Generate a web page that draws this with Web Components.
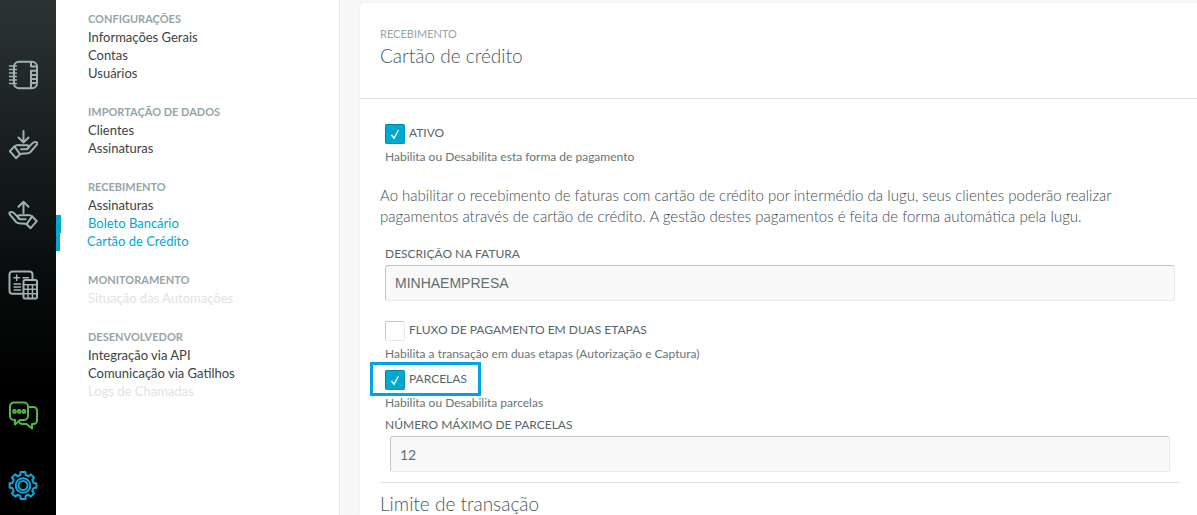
<!DOCTYPE html>
<html lang="pt-BR">
<head>
<meta charset="utf-8">
<title>Cartão de crédito</title>
<style>
  body { margin: 0; background: #f6f7f9; font-family: Lato, "Open Sans", sans-serif; color: #5f6e70; }
</style>
</head>
<body>
<app-shell>
  <icon-rail slot="rail"></icon-rail>
  <side-nav slot="nav">
    <nav-section heading="Configurações">
      <nav-item>Informações Gerais</nav-item>
      <nav-item>Contas</nav-item>
      <nav-item>Usuários</nav-item>
    </nav-section>
    <nav-section heading="Importação de dados">
      <nav-item>Clientes</nav-item>
      <nav-item>Assinaturas</nav-item>
    </nav-section>
    <nav-section heading="Recebimento">
      <nav-item>Assinaturas</nav-item>
      <nav-item state="hover">Boleto Bancário</nav-item>
      <nav-item state="active">Cartão de Crédito</nav-item>
    </nav-section>
    <nav-section heading="Monitoramento">
      <nav-item state="disabled">Situação das Automações</nav-item>
    </nav-section>
    <nav-section heading="Desenvolvedor">
      <nav-item>Integração via API</nav-item>
      <nav-item>Comunicação via Gatilhos</nav-item>
      <nav-item state="disabled">Logs de Chamadas</nav-item>
    </nav-section>
  </side-nav>
  <settings-card>
    <span slot="eyebrow">RECEBIMENTO</span>
    <span slot="title">Cartão de crédito</span>
    <check-field label="ATIVO" hint="Habilita ou Desabilita esta forma de pagamento" checked></check-field>
    <intro-text>Ao habilitar o recebimento de faturas com cartão de crédito por intermédio da Iugu, seus clientes poderão realizar pagamentos através de cartão de crédito. A gestão destes pagamentos é feita de forma automática pela Iugu.</intro-text>
    <text-field label="DESCRIÇÃO NA FATURA" value="MINHAEMPRESA"></text-field>
    <field-group>
      <check-field label="FLUXO DE PAGAMENTO EM DUAS ETAPAS" hint="Habilita a transação em duas etapas (Autorização e Captura)"></check-field>
      <check-field label="PARCELAS" hint="Habilita ou Desabilita parcelas" checked marked></check-field>
      <text-field label="NÚMERO MÁXIMO DE PARCELAS" value="12" numeric></text-field>
    </field-group>
    <sub-heading>Limite de transação</sub-heading>
  </settings-card>
</app-shell>

<script>
const define = (name, render) => customElements.define(name, class extends HTMLElement {
  connectedCallback() {
    if (!this.shadowRoot) this.attachShadow({ mode: 'open' }).innerHTML = render(this);
  }
});

define('app-shell', () => `
  <style>
    :host { display: flex; min-height: 100vh; }
    main { flex: 1; min-width: 0; padding: 3px 0 0 20px; display: flex; }
  </style>
  <slot name="rail"></slot>
  <slot name="nav"></slot>
  <main><slot></slot></main>`);

/* Eight-tooth cog outline centred on (cx, cy). */
const cog = (cx, cy) => {
  const pts = [];
  for (let i = 0; i < 8; i++) {
    for (const [offset, r] of [[-14, 10.8], [-10, 13.6], [10, 13.6], [14, 10.8]]) {
      const a = (i * 45 + offset - 90) * Math.PI / 180;
      pts.push((cx + r * Math.cos(a)).toFixed(2) + ' ' + (cy + r * Math.sin(a)).toFixed(2));
    }
  }
  return 'M' + pts.join('L') + 'Z';
};

const hand = `<path d="M1.8 21.2 6.4 16.4 12 24.2 8 28.2Z"/>
  <path d="M6.4 16.4C8 15 10 14.8 13 15.2h6.200c2.200 0 2.200 3.200 0 3.600L24 13.600c1-1 2.500-1.700 4.300-1.500 1.200.3 1.200 1.800.4 2.600L22.500 22c-1.200 1.200-2.500 1.500-4.500 1.500-2.500 0-4.500-.2-6 .7M13 19.300h6"/>`;

const icons = {
  contatos: `<rect x="6" y="1.800" width="23" height="26.500" rx="5"/>
    <path d="M23 2v4.500h5.500M23 28V10.800h6M23 15h6M23 19h6M23 23h6"/>
    <path d="M1.500 6h7M1.500 9.500h7M1.500 13h7M1.500 16.500h7M1.500 20h7M1.500 23.500h7" stroke-width="1.400"/>`,
  receber: `<path d="M15.500 1v11M10.500 7.500l5 5 5-5"/>${hand}`,
  pagar: `<path d="M15.500 13V2M10.500 6.700l5-5 5 5"/><g transform="matrix(-1 0 0 1 30.600 0)">${hand}</g>`,
  financeiro: `<path d="M15 23.700H4.500a3 3 0 0 1-3-3V4.500a3 3 0 0 1 3-3H21.500a3 3 0 0 1 3 3V9"/>
    <path d="M6 7.700h5.500M8.700 5v5.500M15 7.700h5.500M6 14h6.500M6 17h6.500M6 20h6.500" stroke-width="1.500"/>
    <rect x="15.500" y="10" width="13.500" height="18.500" rx="1.500"/>
    <path d="M15.500 14.700h13.500M15.500 19.200h13.500M15.500 23.800h13.500M20 14.700v13.500M24.500 14.700v13.500" stroke-width="1.500"/>`,
  suporte: `<path d="M6 2.500H16a4 4 0 0 1 4 4V16a4 4 0 0 1-4 4H12L7 24.500V20H6a4 4 0 0 1-4-4V6.500a4 4 0 0 1 4-4Z"/>
    <path d="M20 7h5.500a3.500 3.500 0 0 1 3.500 3.500V20.500a3.500 3.500 0 0 1-3.500 3.500H24v4.500L18.500 24H15c-2.500 0-4-1.200-4-3.200"/>
    <circle cx="6.500" cy="11.500" r="1.400"/><circle cx="11.200" cy="11.500" r="1.400"/><circle cx="15.900" cy="11.500" r="1.400"/>`,
  ajustes: `<path d="${cog(15, 15.5)}"/><circle cx="15" cy="15.500" r="7.300"/><circle cx="15" cy="15.500" r="4.500"/>`
};
const button = (name, label) => `<button type="button" class="${name}" aria-label="${label}">
  <svg viewBox="0 0 30 30" width="30" height="30" aria-hidden="true">${icons[name]}</svg></button>`;

define('icon-rail', () => `
  <style>
    :host { display: flex; flex: none; width: 56px; box-sizing: border-box; flex-direction: column; gap: 10px;
      padding-top: 45px; background: linear-gradient(#2a3533 0, #151b1b 170px, #0a0d0d 270px, #000 390px); }
    button { display: flex; align-items: center; height: 60px; width: 100%; margin: 0; padding: 0 8px;
      border: 0; background: none; color: #9fb2b2; cursor: pointer; }
    svg { fill: none; stroke: currentColor; stroke-width: 2; stroke-linejoin: round; stroke-linecap: round; }
    .suporte { margin-top: auto; color: #4fb848; }
    .ajustes { color: #0fa9da; }
  </style>
  ${button('contatos', 'Contatos')}${button('receber', 'Receber')}${button('pagar', 'Pagar')}
  ${button('financeiro', 'Financeiro')}${button('suporte', 'Suporte')}${button('ajustes', 'Ajustes')}`);

define('side-nav', () => `
  <style>
    :host { display: block; flex: none; width: 284px; box-sizing: border-box; padding-top: 10px;
      background: #fff; border-right: 1px solid #e1e5e8; }
    nav { display: flex; flex-direction: column; gap: 20px; }
  </style>
  <nav><slot></slot></nav>`);

define('nav-section', el => `
  <style>
    :host { display: block; }
    h2 { margin: 0; padding: 0 0 2px 32px; font-size: 11px; line-height: 17px; font-weight: 700; color: #95a5a6; }
  </style>
  <h2>${el.getAttribute('heading').toUpperCase()}</h2>
  <slot></slot>`);

define('nav-item', () => `
  <style>
    :host { display: block; font-size: 13px; line-height: 16px; color: #3c4344; }
    a { display: block; padding: 0 0 2px 32px; color: inherit; text-decoration: none; }
    :host([state="hover"]), :host([state="active"]) { color: #00a9d0; }
    :host([state="hover"]) a { border-left: 5px solid #00a9d0; padding-left: 27px; }
    :host([state="active"]) a { border-left: 4px solid #00a9d0; padding-left: 27px; }
    :host([state="disabled"]) { color: #dfe3e4; }
  </style>
  <a href="#"><slot></slot></a>`);

define('settings-card', () => `
  <style>
    :host { display: block; flex: 1; min-width: 0; background: #fff; border-radius: 5px 0 0 0;
      box-shadow: 0 0 4px rgba(60, 80, 100, .06); }
    header { padding: 22px 20px 30px; border-bottom: 1px solid #e2e4e4; }
    p { margin: 0; font-size: 11px; line-height: 18px; color: #95a5a6; }
    h1 { margin: 0; font-size: 19px; line-height: 25px; font-weight: 300; color: #46565a; }
    section { padding: 25px 17px 0 20px; }
  </style>
  <header><p><slot name="eyebrow"></slot></p><h1><slot name="title"></slot></h1></header>
  <section><slot></slot></section>`);

define('field-group', () => `
  <style>
    :host { display: block; padding: 20px 0 10px; border-bottom: 1px solid #e2e4e4; }
    ::slotted(text-field) { --inset: 10px; }
    ::slotted(check-field[marked]) { margin-top: 4px; }
  </style>
  <slot></slot>`);

define('check-field', el => `
  <style>
    :host { display: block; padding-left: 5px; }
    .row { position: relative; display: flex; width: max-content; align-items: center; height: 20px; gap: 4px; }
    :host([marked]) .row::after { content: ""; position: absolute; inset: -8px -14px -6px -15px;
      border: 3px solid #00a2e8; pointer-events: none; }
    input { appearance: none; width: 20px; height: 20px; margin: 0; box-sizing: border-box; background: #fff;
      border: 1px solid; border-color: #c4c8c8 #e9e9e9 #e9e9e9 #c4c8c8; border-radius: 2px; }
    input:checked { border-color: #0088ab; border-right-color: #0098bc; border-bottom-color: #0098bc;
      background: #00a9d0; }
    .box { position: relative; display: flex; }
    svg { position: absolute; inset: 0; fill: none; stroke: #fff; stroke-width: 1.4; pointer-events: none; }
    input:not(:checked) + svg { display: none; }
    label { font-size: 12px; line-height: 18px; padding-bottom: 2px; color: #56666a; }
    p { margin: 0; padding: 4px 0 3px; font-size: 12px; line-height: 18px; color: #677577; }
  </style>
  <div class="row">
    <span class="box"><input type="checkbox" id="c"${el.hasAttribute('checked') ? ' checked' : ''}>
      <svg viewBox="0 0 20 20" width="20" height="20" aria-hidden="true"><path d="M6.500 11 9 14.300 13.500 6"/></svg></span>
    <label for="c">${el.getAttribute('label')}</label>
  </div>
  <p>${el.getAttribute('hint')}</p>`);

define('intro-text', () => `
  <style>
    :host { display: block; max-width: 750px; padding: 16px 0 17px; font-size: 15px; line-height: 21px;
      font-weight: 300; color: #3c4c50; }
  </style>
  <slot></slot>`);

define('text-field', el => `
  <style>
    :host { display: block; padding: 0 5px; }
    label { display: block; padding-bottom: 1px; font-size: 12px; line-height: 20px; color: #56666a; }
    .well { padding: 0 calc(var(--inset, 5px) - 5px); }
    input { display: block; width: 100%; height: 36px; box-sizing: border-box; margin: 0; padding: 0 9px;
      font: 14px "Liberation Sans", Arial, sans-serif; color: #5f6e70; background: #f9f9f9;
      border: 1px solid; border-color: #c4c6c6 #e9e9e9 #e9e9e9 #c4c6c6; border-radius: 3px; }
    :host([numeric]) input { font-family: Lato, sans-serif; }
  </style>
  <label for="t">${el.getAttribute('label')}</label>
  <div class="well"><input id="t" type="text" value="${el.getAttribute('value')}"></div>`);

define('sub-heading', () => `
  <style>
    :host { display: block; padding-top: 9px; }
    h2 { margin: 0; font-size: 19px; line-height: 23px; font-weight: 300; color: #46565a; }
  </style>
  <h2><slot></slot></h2>`);
</script>
</body>
</html>
